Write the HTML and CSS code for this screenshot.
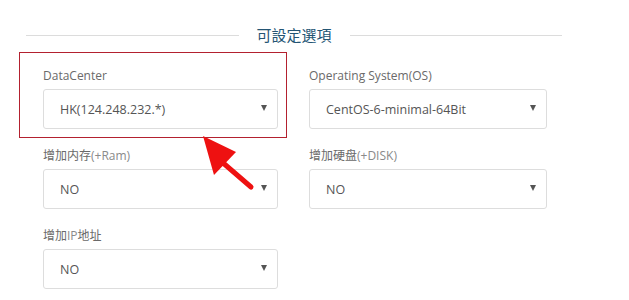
FILE: index.html
```html
<!DOCTYPE html>
<html lang="zh">
<head>
    <meta charset="UTF-8">
    <meta name="viewport" content="width=device-width, initial-scale=1.0">
    <title>可設定選項</title>
    <link rel="stylesheet" href="styles.css">
</head>
<body>
    <div class="options-panel">
        <div class="section-title"><span>可設定選項</span></div>

        <div class="options-grid">
            <div class="field">
                <label>DataCenter</label>
                <div class="select-box">
                    <span>HK(124.248.232.*)</span>
                    <i class="caret"></i>
                </div>
            </div>
            <div class="field">
                <label>Operating System(OS)</label>
                <div class="select-box">
                    <span>CentOS-6-minimal-64Bit</span>
                    <i class="caret"></i>
                </div>
            </div>
            <div class="field">
                <label>增加内存<small>(+Ram)</small></label>
                <div class="select-box">
                    <span>NO</span>
                    <i class="caret"></i>
                </div>
            </div>
            <div class="field">
                <label>增加硬盘<small>(+DISK)</small></label>
                <div class="select-box">
                    <span>NO</span>
                    <i class="caret"></i>
                </div>
            </div>
            <div class="field">
                <label>增加<small>IP</small>地址</label>
                <div class="select-box">
                    <span>NO</span>
                    <i class="caret"></i>
                </div>
            </div>
        </div>
    </div>

    <!-- screenshot annotation: highlight box + arrow -->
    <div class="highlight-box"></div>
    <svg class="pointer-arrow" width="629" height="300" viewBox="0 0 629 300">
        <line x1="251" y1="187" x2="222" y2="162" stroke="#ee1111" stroke-width="5" stroke-linecap="round"/>
        <polygon points="203,136 236,152 214,175" fill="#ee1111"/>
    </svg>
</body>
</html>
```

FILE: styles.css
```css
* {
    margin: 0;
    padding: 0;
    box-sizing: border-box;
}

body {
    background: #fff;
    font-family: 'Open Sans', 'Noto Sans CJK SC', sans-serif;
    overflow: hidden;
}

.options-panel {
    width: 536px;
    margin-left: 26px;
    padding-top: 24px;
}

.section-title {
    display: flex;
    align-items: center;
    height: 22px;
    margin-bottom: 21px;
}

.section-title::before,
.section-title::after {
    content: '';
    flex: 1;
    border-top: 1px solid #dcdcdc;
}

.section-title span {
    padding: 0 18px;
    font-family: 'Noto Sans CJK TC', sans-serif;
    font-size: 15px;
    line-height: 22px;
    color: #245574;
}

.options-grid {
    display: grid;
    grid-template-columns: 235px 238px;
    column-gap: 31px;
    row-gap: 18px;
    padding-left: 17px;
}

.field label {
    display: block;
    font-size: 12px;
    line-height: 18px;
    color: #6a6a6a;
    margin-bottom: 4px;
}

.field label small {
    font-size: 12px;
    color: #8a8a8a;
}

.select-box {
    display: flex;
    align-items: center;
    justify-content: space-between;
    height: 40px;
    padding: 0 10px 0 16px;
    border: 1px solid #ddd;
    border-radius: 3px;
    font-size: 12.5px;
    color: #555;
}

.caret {
    width: 0;
    height: 0;
    border-left: 3.5px solid transparent;
    border-right: 3.5px solid transparent;
    border-top: 6px solid #555;
    margin-top: -3px;
}

.highlight-box {
    position: absolute;
    left: 19px;
    top: 52px;
    width: 268px;
    height: 86px;
    border: 1px solid #b3212f;
    pointer-events: none;
}

.pointer-arrow {
    position: absolute;
    left: 0;
    top: 0;
    pointer-events: none;
}
```
